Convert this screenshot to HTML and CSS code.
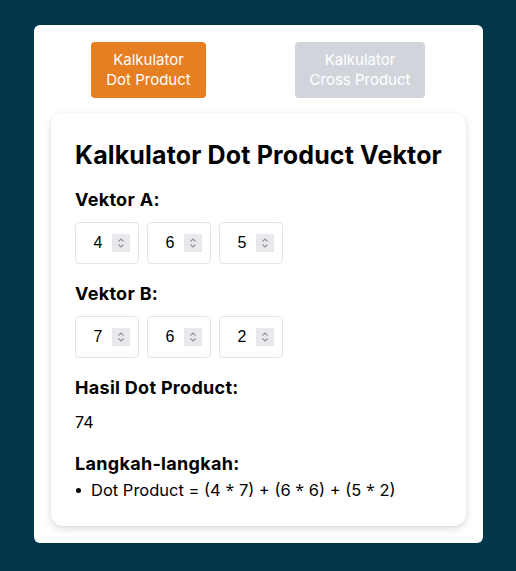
FILE: index.html
```html
<!DOCTYPE html>
<html lang="id">
<head>
<meta charset="utf-8">
<title>Kalkulator Vektor</title>
<link rel="stylesheet" href="styles.css">
</head>
<body>
<div class="app">
  <div class="tabs">
    <button class="tab tab-active">Kalkulator<br>Dot Product</button>
    <button class="tab tab-inactive">Kalkulator<br>Cross Product</button>
  </div>
  <div class="card">
    <h1 class="title">Kalkulator Dot Product Vektor</h1>
    <section class="section">
      <h2 class="label">Vektor A:</h2>
      <div class="inputs">
        <div class="num"><input class="num-field" type="text" value="4" readonly><span class="spin"><svg width="18" height="18" viewBox="0 0 18 18"><path d="M6.5 7.5 L9 5 L11.5 7.5" fill="none" stroke="#8e8e96" stroke-width="1.1"/><path d="M6.5 10.5 L9 13 L11.5 10.5" fill="none" stroke="#8e8e96" stroke-width="1.1"/></svg></span></div>
        <div class="num"><input class="num-field" type="text" value="6" readonly><span class="spin"><svg width="18" height="18" viewBox="0 0 18 18"><path d="M6.5 7.5 L9 5 L11.5 7.5" fill="none" stroke="#8e8e96" stroke-width="1.1"/><path d="M6.5 10.5 L9 13 L11.5 10.5" fill="none" stroke="#8e8e96" stroke-width="1.1"/></svg></span></div>
        <div class="num"><input class="num-field" type="text" value="5" readonly><span class="spin"><svg width="18" height="18" viewBox="0 0 18 18"><path d="M6.5 7.5 L9 5 L11.5 7.5" fill="none" stroke="#8e8e96" stroke-width="1.1"/><path d="M6.5 10.5 L9 13 L11.5 10.5" fill="none" stroke="#8e8e96" stroke-width="1.1"/></svg></span></div>
      </div>
    </section>
    <section class="section">
      <h2 class="label">Vektor B:</h2>
      <div class="inputs">
        <div class="num"><input class="num-field" type="text" value="7" readonly><span class="spin"><svg width="18" height="18" viewBox="0 0 18 18"><path d="M6.5 7.5 L9 5 L11.5 7.5" fill="none" stroke="#8e8e96" stroke-width="1.1"/><path d="M6.5 10.5 L9 13 L11.5 10.5" fill="none" stroke="#8e8e96" stroke-width="1.1"/></svg></span></div>
        <div class="num"><input class="num-field" type="text" value="6" readonly><span class="spin"><svg width="18" height="18" viewBox="0 0 18 18"><path d="M6.5 7.5 L9 5 L11.5 7.5" fill="none" stroke="#8e8e96" stroke-width="1.1"/><path d="M6.5 10.5 L9 13 L11.5 10.5" fill="none" stroke="#8e8e96" stroke-width="1.1"/></svg></span></div>
        <div class="num"><input class="num-field" type="text" value="2" readonly><span class="spin"><svg width="18" height="18" viewBox="0 0 18 18"><path d="M6.5 7.5 L9 5 L11.5 7.5" fill="none" stroke="#8e8e96" stroke-width="1.1"/><path d="M6.5 10.5 L9 13 L11.5 10.5" fill="none" stroke="#8e8e96" stroke-width="1.1"/></svg></span></div>
      </div>
    </section>
    <section class="section">
      <h2 class="label">Hasil Dot Product:</h2>
      <p class="result">74</p>
    </section>
    <section class="section">
      <h2 class="label label-tight">Langkah-langkah:</h2>
      <ul class="steps">
        <li class="step">Dot Product = (4 <span class="op">*</span> 7) + (6 <span class="op">*</span> 6) + (5 <span class="op">*</span> 2)</li>
      </ul>
    </section>
  </div>
</div>
</body>
</html>
```

FILE: styles.css
```css
html, body {
  margin: 0;
  padding: 0;
}
body {
  background: #02364a;
  font-family: Inter, "Noto Sans", sans-serif;
  color: #000;
  padding-top: 25px;
  min-height: 571px;
  box-sizing: border-box;
}
.app {
  width: 449px;
  margin: 0 auto 0 34px;
  background: #fff;
  border-radius: 6px;
  padding: 17px;
  box-sizing: border-box;
}
.tabs {
  display: flex;
  gap: 89px;
  padding-left: 40px;
}
.tab {
  font-family: Inter, "Noto Sans", sans-serif;
  font-size: 15px;
  line-height: 20px;
  font-weight: 400;
  color: #fff;
  border: none;
  border-radius: 4px;
  padding: 8px 0;
  text-align: center;
  cursor: pointer;
}
.tab-active {
  width: 115px;
  background: #e67e22;
}
.tab-inactive {
  width: 130px;
  background: #d1d5db;
}
.card {
  margin-top: 15px;
  background: #fff;
  border-radius: 12px;
  box-shadow: 0 3px 8px rgba(0, 0, 0, 0.12), 0 1px 3px rgba(0, 0, 0, 0.06);
  padding: 26px 24px 24px;
}
.title {
  margin: 0 0 17px;
  font-size: 25px;
  line-height: 32px;
  font-weight: 700;
  letter-spacing: 0.15px;
  white-space: nowrap;
}
.section + .section {
  margin-top: 18px;
}
.label {
  margin: 0 0 10px;
  font-size: 18px;
  line-height: 24px;
  font-weight: 700;
  letter-spacing: 0.3px;
}
.label-tight {
  margin-bottom: 2px;
}
.inputs {
  display: flex;
  gap: 8px;
}
.num {
  width: 64px;
  height: 42px;
  box-sizing: border-box;
  border: 1px solid #e3e4e8;
  border-radius: 4px;
  display: flex;
  align-items: center;
  padding: 0 8px;
}
.num-field {
  flex: 1;
  min-width: 0;
  width: 28px;
  border: none;
  outline: none;
  padding: 0;
  margin: 0;
  background: transparent;
  font-family: "Liberation Sans", Arial, sans-serif;
  font-size: 16px;
  color: #000;
  text-align: center;
}
.spin {
  width: 18px;
  height: 18px;
  background: #e8e8ed;
  display: block;
}
.spin svg {
  display: block;
}
.result {
  margin: 0;
  font-size: 16px;
  line-height: 24px;
}
.steps {
  margin: 0;
  padding: 0;
  list-style: none;
}
.step {
  font-size: 16.5px;
  line-height: 24px;
  display: flex;
  align-items: center;
  white-space: pre;
}
.step::before {
  content: "";
  width: 5px;
  height: 5px;
  border-radius: 50%;
  background: #000;
  margin: 0 10px 0 1px;
  flex: none;
}
.op {
  font-family: "Open Sans", sans-serif;
  font-size: 16px;
}
```
